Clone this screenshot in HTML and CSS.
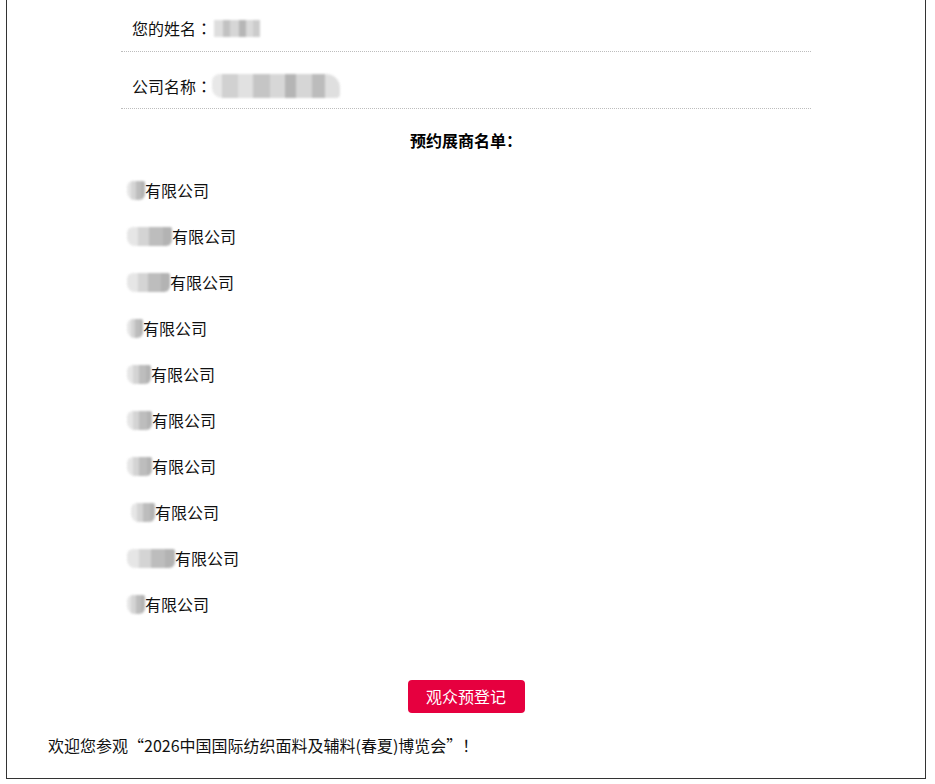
FILE: index.html
```html
<!DOCTYPE html>
<html lang="zh-CN">
<head>
<meta charset="utf-8">
<title>预约展商名单</title>
<link rel="stylesheet" href="styles.css">
</head>
<body>
<div class="page">
  <div class="form">
    <div class="row row-first">您的姓名<span class="punct">：</span><span class="mask mask-name"></span></div>
    <div class="row">公司名称<span class="punct">：</span><span class="mask mask-company"></span></div>
    <h3 class="title">预约展商名单<span class="punct">：</span></h3>
    <ul class="list">
      <li><span class="mask m1"></span>有限公司</li>
      <li><span class="mask m2"></span>有限公司</li>
      <li><span class="mask m3"></span>有限公司</li>
      <li><span class="mask m4"></span>有限公司</li>
      <li><span class="mask m5"></span>有限公司</li>
      <li><span class="mask m6"></span>有限公司</li>
      <li><span class="mask m7"></span>有限公司</li>
      <li><span class="mask m8"></span>有限公司</li>
      <li><span class="mask m9"></span>有限公司</li>
      <li><span class="mask m10"></span>有限公司</li>
    </ul>
    <div class="actions"><a class="btn" href="#">观众预登记</a></div>
  </div>
  <p class="welcome">欢迎您参观“2026中国国际纺织面料及辅料(春夏)博览会”<span class="punct">！</span></p>
</div>
</body>
</html>
```

FILE: styles.css
```css
html, body {
  margin: 0;
  padding: 0;
  background: #fff;
}
body {
  font-family: "Noto Sans CJK SC", "Noto Sans", sans-serif;
  font-size: 16px;
  color: #111;
}
.punct {
  font-family: "Noto Sans CJK TC", "Noto Sans CJK SC", sans-serif;
}
.page {
  margin: 0 9px 0 6px;
  border: 1px solid #333;
  border-top: 0;
}
.form {
  width: 690px;
  margin: 0 auto;
}
.row {
  display: flex;
  align-items: center;
  padding: 22px 0 10px 11px;
  line-height: 24px;
  border-bottom: 1px dotted #bdbdbd;
}
.row-first {
  padding-top: 16px;
  padding-bottom: 11px;
}
.mask {
  display: inline-block;
  height: 17px;
  background:
    linear-gradient(90deg, #d9d9d9 0 20%, #b8b8b8 20% 35%, #cfcfcf 35% 55%, #aaaaaa 55% 70%, #d4d4d4 70% 85%, #c4c4c4 85% 100%);
  filter: blur(0.8px);
  opacity: 0.85;
}
.mask-name {
  width: 46px;
  margin-left: 2px;
}
.mask-company {
  width: 128px;
  height: 24px;
  border-radius: 8px 14px 4px 10px;
  background:
    linear-gradient(90deg, #e4e4e4 0 8%, #c9c9c9 8% 20%, #dcdcdc 20% 32%, #bcbcbc 32% 45%, #d1d1d1 45% 57%, #a9a9a9 57% 66%, #cfcfcf 66% 78%, #b1b1b1 78% 88%, #dadada 88% 100%);
}
.title {
  margin: 19px 0 0;
  text-align: center;
  font-size: 16px;
  font-weight: bold;
  line-height: 24px;
  color: #000;
}
.list {
  list-style: none;
  margin: 26px 0 0;
  padding: 0 0 0 6px;
  display: flex;
  flex-direction: column;
  gap: 22px;
}
.list li {
  display: flex;
  align-items: center;
  line-height: 24px;
}
.list .mask {
  height: 19px;
  border-radius: 6px 2px 6px 8px;
  background:
    linear-gradient(90deg, #e2e2e2 0 25%, #cdcdcd 25% 50%, #b2b2b2 50% 80%, #a6a6a6 80% 100%);
}
.m1 { width: 18px; }
.m2 { width: 45px; }
.m3 { width: 43px; }
.m4 { width: 16px; }
.m5 { width: 24px; }
.m6 { width: 25px; }
.m7 { width: 25px; }
.m8 { width: 24px; margin-left: 4px; }
.m9 { width: 48px; }
.m10 { width: 18px; }
.actions {
  margin-top: 64px;
  display: flex;
  justify-content: center;
}
.btn {
  display: inline-block;
  width: 117px;
  height: 33px;
  line-height: 33px;
  text-align: center;
  background: #e6003f;
  color: #fff;
  border-radius: 4px;
  text-decoration: none;
  font-size: 16px;
}
.welcome {
  margin: 20px 0 0;
  padding: 0 0 21px 41px;
  line-height: 24px;
}
```
